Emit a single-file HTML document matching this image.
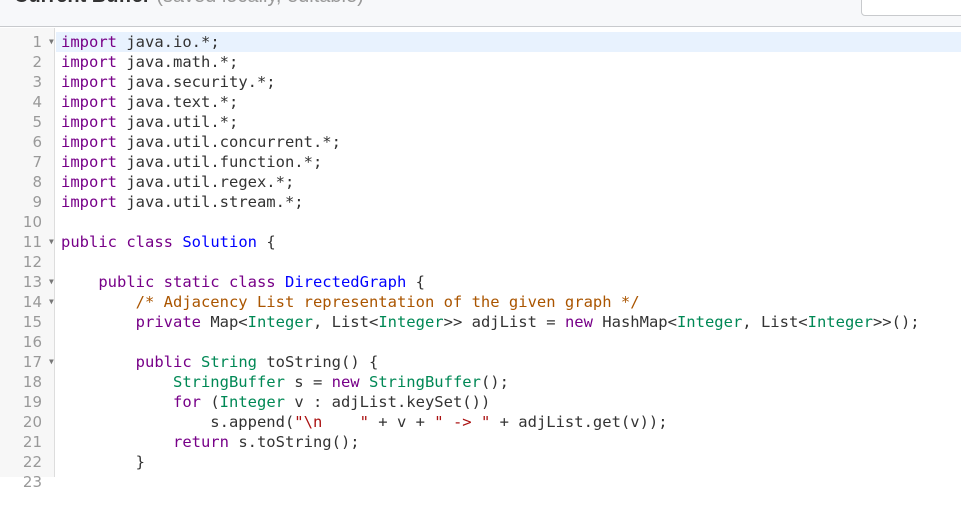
<!DOCTYPE html>
<html><head><meta charset="utf-8"><style>
*{margin:0;padding:0;box-sizing:border-box}
body{width:961px;height:477px;overflow:hidden;background:#fff;font-family:"Liberation Sans",sans-serif;position:relative}
.hdr{position:absolute;left:0;top:0;width:961px;height:27px;background:#f7f8fa;border-bottom:1px solid #c8cacd}
.title{position:absolute;left:14px;top:-15px;font-size:20px;color:#333;font-weight:bold;white-space:nowrap}
.title span{font-weight:normal;color:#999}
.sel{position:absolute;left:861px;top:-10px;width:110px;height:26px;background:#fff;border:1px solid #c8cacd;border-radius:4px}
.gut{position:absolute;left:0;top:28px;width:55px;height:449px;background:#f7f7f7;border-right:1px solid #ddd}
.hl{position:absolute;left:56px;top:32px;width:905px;height:20px;background:#e8f2fe}
.code{position:absolute;left:0;top:32px;font-family:"DejaVu Sans Mono",monospace;font-size:15.5px;line-height:20px;color:#333;white-space:pre}
.ln{position:absolute;left:0;width:42px;text-align:right;color:#999;font-family:"DejaVu Sans",sans-serif;font-size:15px}
.ar{position:absolute;left:49px;color:#777;font-size:8px}
.tx{position:absolute;left:61px}
.k{color:#708}.t{color:#085}.d{color:#00f}.c{color:#a50}.s{color:#a11}
</style></head><body>
<div class="hdr"><div class="title">Current Buffer <span>(saved locally, editable)</span></div><div class="sel"></div></div>
<div class="gut"></div>
<div class="hl"></div>
<div class="code">
<div class="ln" style="top:0">1</div><div class="ar" style="top:0">▼</div><div class="tx" style="top:0"><span class="k">import</span> java.io.*;</div>
<div class="ln" style="top:20px">2</div><div class="tx" style="top:20px"><span class="k">import</span> java.math.*;</div>
<div class="ln" style="top:40px">3</div><div class="tx" style="top:40px"><span class="k">import</span> java.security.*;</div>
<div class="ln" style="top:60px">4</div><div class="tx" style="top:60px"><span class="k">import</span> java.text.*;</div>
<div class="ln" style="top:80px">5</div><div class="tx" style="top:80px"><span class="k">import</span> java.util.*;</div>
<div class="ln" style="top:100px">6</div><div class="tx" style="top:100px"><span class="k">import</span> java.util.concurrent.*;</div>
<div class="ln" style="top:120px">7</div><div class="tx" style="top:120px"><span class="k">import</span> java.util.function.*;</div>
<div class="ln" style="top:140px">8</div><div class="tx" style="top:140px"><span class="k">import</span> java.util.regex.*;</div>
<div class="ln" style="top:160px">9</div><div class="tx" style="top:160px"><span class="k">import</span> java.util.stream.*;</div>
<div class="ln" style="top:180px">10</div>
<div class="ln" style="top:200px">11</div><div class="ar" style="top:200px">▼</div><div class="tx" style="top:200px"><span class="k">public class</span> <span class="d">Solution</span> {</div>
<div class="ln" style="top:220px">12</div>
<div class="ln" style="top:240px">13</div><div class="ar" style="top:240px">▼</div><div class="tx" style="top:240px">    <span class="k">public static class</span> <span class="d">DirectedGraph</span> {</div>
<div class="ln" style="top:260px">14</div><div class="ar" style="top:260px">▼</div><div class="tx" style="top:260px">        <span class="c">/* Adjacency List representation of the given graph */</span></div>
<div class="ln" style="top:280px">15</div><div class="tx" style="top:280px">        <span class="k">private</span> Map&lt;<span class="t">Integer</span>, List&lt;<span class="t">Integer</span>&gt;&gt; adjList = <span class="k">new</span> HashMap&lt;<span class="t">Integer</span>, List&lt;<span class="t">Integer</span>&gt;&gt;();</div>
<div class="ln" style="top:300px">16</div>
<div class="ln" style="top:320px">17</div><div class="ar" style="top:320px">▼</div><div class="tx" style="top:320px">        <span class="k">public</span> <span class="t">String</span> toString() {</div>
<div class="ln" style="top:340px">18</div><div class="tx" style="top:340px">            <span class="t">StringBuffer</span> s = <span class="k">new</span> <span class="t">StringBuffer</span>();</div>
<div class="ln" style="top:360px">19</div><div class="tx" style="top:360px">            <span class="k">for</span> (<span class="t">Integer</span> v : adjList.keySet())</div>
<div class="ln" style="top:380px">20</div><div class="tx" style="top:380px">                s.append(<span class="s">"\n    "</span> + v + <span class="s">" -&gt; "</span> + adjList.get(v));</div>
<div class="ln" style="top:400px">21</div><div class="tx" style="top:400px">            <span class="k">return</span> s.toString();</div>
<div class="ln" style="top:420px">22</div><div class="tx" style="top:420px">        }</div>
<div class="ln" style="top:440px">23</div>
</div>
</body></html>
